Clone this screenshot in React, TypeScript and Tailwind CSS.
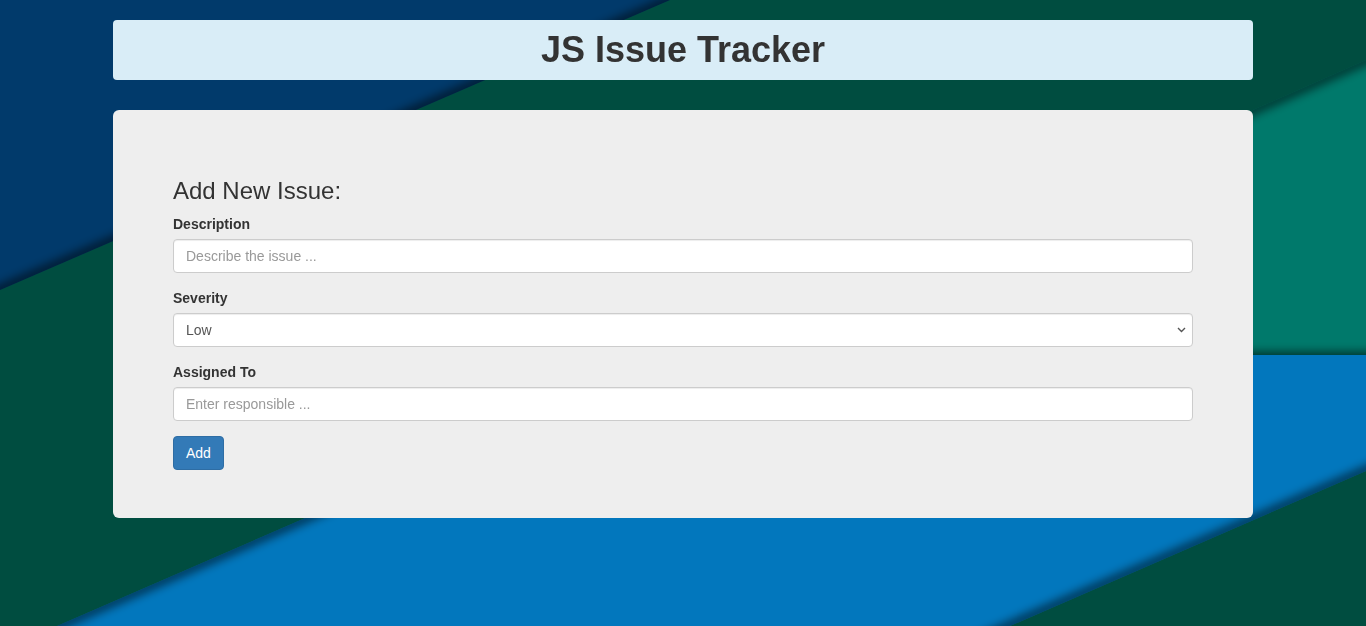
import { useState } from "react";

// Layered diagonal background, drawn as one svg behind the page
function Backdrop() {
  return (
    <svg
      className="fixed inset-0 -z-10 h-full w-full"
      viewBox="0 0 1366 626"
      preserveAspectRatio="none"
    >
      <defs>
        <filter id="soft" x="-20%" y="-20%" width="140%" height="140%">
          <feGaussianBlur stdDeviation="5" />
        </filter>
        <clipPath id="clipTopLeft">
          <polygon points="0,0 670,0 0,290" />
        </clipPath>
        <clipPath id="clipTeal">
          <polygon points="699,355 1366,60 1366,355" />
        </clipPath>
        <clipPath id="clipBlue">
          <polygon points="57,626 680,355 1366,355 1366,471 1010,626" />
        </clipPath>
      </defs>

      <rect width="1366" height="626" fill="#004d40" />

      <polygon points="0,0 670,0 0,290" fill="#013a6b" />
      <g clipPath="url(#clipTopLeft)" filter="url(#soft)">
        <line x1="-40" y1="307" x2="710" y2="-17" stroke="#000" strokeOpacity="0.55" strokeWidth="10" />
      </g>

      <polygon points="699,355 1366,60 1366,355" fill="#00796b" />
      <g clipPath="url(#clipTeal)" filter="url(#soft)">
        <line x1="650" y1="377" x2="1400" y2="45" stroke="#000" strokeOpacity="0.55" strokeWidth="10" />
        <line x1="650" y1="358" x2="1400" y2="358" stroke="#000" strokeOpacity="0.6" strokeWidth="12" />
      </g>

      <polygon points="57,626 680,355 1366,355 1366,471 1010,626" fill="#0277bd" />
      <g clipPath="url(#clipBlue)" filter="url(#soft)">
        <line x1="20" y1="642" x2="720" y2="338" stroke="#000" strokeOpacity="0.55" strokeWidth="10" />
        <line x1="970" y1="643" x2="1400" y2="456" stroke="#000" strokeOpacity="0.55" strokeWidth="10" />
      </g>
    </svg>
  );
}

export default function App() {
  const [description, setDescription] = useState("");
  const [severity, setSeverity] = useState("Low");
  const [assignedTo, setAssignedTo] = useState("");

  const handleSubmit = (e: React.FormEvent) => {
    e.preventDefault();
  };

  const inputClass =
    "block h-[34px] w-full rounded-[4px] border border-[#ccc] bg-white px-3 py-1.5 text-[14px] leading-[20px] text-[#555] shadow-[inset_0_1px_1px_rgba(0,0,0,0.075)] outline-none placeholder:text-[#999]";

  return (
    <div className="relative min-h-screen font-['Liberation_Sans',Arial,sans-serif] text-[14px] leading-[20px] text-[#333]">
      <Backdrop />

      <div className="mx-auto w-[1140px] pt-5">
        <div className="flex h-[60px] items-center justify-center rounded-[4px] bg-[#d9edf7]">
          <h1 className="text-[36px] font-bold leading-[40px] text-[#333]">
            JS Issue Tracker
          </h1>
        </div>

        <div className="mt-[30px] rounded-[6px] bg-[#eee] px-[60px] py-12">
          <h3 className="mt-5 mb-2.5 text-[24px] leading-[26px]">
            Add New Issue:
          </h3>
          <form onSubmit={handleSubmit}>
            <div className="mb-[15px]">
              <label htmlFor="desc" className="mb-[5px] inline-block font-bold">
                Description
              </label>
              <input
                id="desc"
                type="text"
                value={description}
                onChange={(e) => setDescription(e.target.value)}
                placeholder="Describe the issue ..."
                className={inputClass}
              />
            </div>

            <div className="mb-[15px]">
              <label htmlFor="sev" className="mb-[5px] inline-block font-bold">
                Severity
              </label>
              <div className="relative">
                <select
                  id="sev"
                  value={severity}
                  onChange={(e) => setSeverity(e.target.value)}
                  className={`${inputClass} appearance-none`}
                >
                  <option value="Low">Low</option>
                  <option value="Medium">Medium</option>
                  <option value="High">High</option>
                </select>
                {/* dropdown chevron */}
                <svg
                  className="pointer-events-none absolute right-[7px] top-[14px] h-[6px] w-[9px]"
                  viewBox="0 0 9 6"
                  fill="none"
                  stroke="#555"
                  strokeWidth="1.4"
                >
                  <path d="M1 1l3.5 3.5L8 1" />
                </svg>
              </div>
            </div>

            <div className="mb-[15px]">
              <label htmlFor="assigned" className="mb-[5px] inline-block font-bold">
                Assigned To
              </label>
              <input
                id="assigned"
                type="text"
                value={assignedTo}
                onChange={(e) => setAssignedTo(e.target.value)}
                placeholder="Enter responsible ..."
                className={inputClass}
              />
            </div>

            <button
              type="submit"
              className="h-[34px] rounded-[4px] border border-[#2e6da4] bg-[#337ab7] px-3 text-[14px] leading-[20px] text-white"
            >
              Add
            </button>
          </form>
        </div>
      </div>
    </div>
  );
}
